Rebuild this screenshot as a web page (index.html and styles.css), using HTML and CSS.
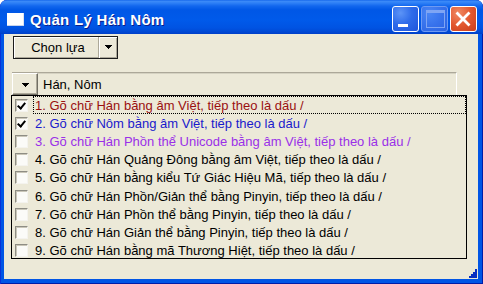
FILE: index.html
```html
<!DOCTYPE html>
<html lang="vi">
<head>
<meta charset="utf-8">
<title>Quản Lý Hán Nôm</title>
<link rel="stylesheet" href="styles.css">
</head>
<body>
<div class="window">
  <div class="titlebar">
    <div class="app-icon"><span class="app-icon-bar"></span></div>
    <div class="title">Quản Lý Hán Nôm</div>
    <div class="caption-buttons">
      <div class="cbtn cbtn-min"><span class="min-bar"></span></div>
      <div class="cbtn cbtn-max"><span class="max-box"></span></div>
      <div class="cbtn cbtn-close">
        <svg width="26" height="26" viewBox="0 0 26 26"><path d="M7.5 7.5 L18.5 18.5 M18.5 7.5 L7.5 18.5" stroke="#fff" stroke-width="2.8" stroke-linecap="square" fill="none"/></svg>
      </div>
    </div>
  </div>
  <div class="client">
    <div class="split-button">
      <span class="split-label">Chọn lựa</span>
      <span class="split-arrow"><svg width="7" height="4" viewBox="0 0 7 4" shape-rendering="crispEdges"><path d="M0 0H7V1H6V2H5V3H4V4H3V3H2V2H1V1H0Z" fill="#000"/></svg></span>
    </div>
    <div class="header">
      <div class="hdr-btn"><svg width="7" height="4" viewBox="0 0 7 4" shape-rendering="crispEdges"><path d="M0 0H7V1H6V2H5V3H4V4H3V3H2V2H1V1H0Z" fill="#000"/></svg></div>
      <div class="hdr-text">Hán, Nôm</div>
    </div>
    <ul class="list">
      <li class="row c-red"><span class="check checked"></span><span class="label focus">1. Gõ chữ Hán bằng âm Việt, tiếp theo là dấu /</span></li>
      <li class="row c-blue"><span class="check checked"></span><span class="label">2. Gõ chữ Nôm bằng âm Việt, tiếp theo là dấu /</span></li>
      <li class="row c-purple"><span class="check"></span><span class="label">3. Gõ chữ Hán Phồn thể Unicode bằng âm Việt, tiếp theo là dấu /</span></li>
      <li class="row"><span class="check"></span><span class="label">4. Gõ chữ Hán Quảng Đông bằng âm Việt, tiếp theo là dấu /</span></li>
      <li class="row"><span class="check"></span><span class="label">5. Gõ chữ Hán bằng kiểu Tứ Giác Hiệu Mã, tiếp theo là dấu /</span></li>
      <li class="row"><span class="check"></span><span class="label">6. Gõ chữ Hán Phồn/Giản thể bằng Pinyin, tiếp theo là dấu /</span></li>
      <li class="row"><span class="check"></span><span class="label">7. Gõ chữ Hán Phồn thể bằng Pinyin, tiếp theo là dấu /</span></li>
      <li class="row"><span class="check"></span><span class="label">8. Gõ chữ Hán Giản thể bằng Pinyin, tiếp theo là dấu /</span></li>
      <li class="row"><span class="check"></span><span class="label">9. Gõ chữ Hán bằng mã Thương Hiệt, tiếp theo là dấu /</span></li>
    </ul>
    <svg class="grip" width="8" height="9" viewBox="0 0 8 9" shape-rendering="crispEdges"><path d="M6 0H8V9H0V7H2V5H4V3H6Z" fill="#0A2FC0"/></svg>
  </div>
</div>
</body>
</html>
```
FILE: styles.css
```css
* { box-sizing: border-box; }

html, body {
  margin: 0;
  padding: 0;
  background: #ffffff;
}

body {
  font-family: "Liberation Sans", Arial, sans-serif;
  font-size: 13px;
  color: #000;
}

.window {
  width: 483px;
  height: 284px;
  display: flex;
  flex-direction: column;
  background: #0055E5;
  border-radius: 7px 7px 0 0;
  padding: 0 5px 5px 4px;
  box-shadow: inset 1px 0 0 #0831D9, inset -1px 0 0 #001DA8, inset 0 -1px 0 #001DA8;
  overflow: hidden;
}

.titlebar {
  height: 34px;
  margin: 0 -5px 0 -4px;
  padding: 4px 6px 0 7px;
  display: flex;
  align-items: center;
  border-radius: 7px 7px 0 0;
  background: linear-gradient(180deg,
    #0A5DE8 0px, #3E8CF8 1px, #2E80F6 3px, #1267EE 6px,
    #0057E6 10px, #005AEA 20px, #0053E2 28px, #0048D3 32px, #003FC8 34px);
}

.app-icon {
  width: 17px;
  height: 13px;
  background: #ffffff;
  box-shadow: inset 0 -1px 0 #C8D4EC, inset -1px 0 0 #DDE4F2;
  display: flex;
}

.app-icon-bar { display: none; }

.title {
  margin-left: 6px;
  color: #ffffff;
  font-family: "Liberation Sans", Arial, sans-serif;
  font-weight: bold;
  font-size: 15px;
  letter-spacing: 0.3px;
  text-shadow: 1px 1px 0 #0A1E8A;
  flex: 1;
}

.caption-buttons {
  display: flex;
  gap: 2px;
}

.cbtn {
  width: 27px;
  height: 26px;
  border: 1px solid #ffffff;
  border-radius: 3px;
  position: relative;
  display: flex;
}

.cbtn-min {
  background: radial-gradient(circle at 30% 25%, #5C94F7 0%, #2F6CEA 45%, #1F55DB 100%);
}

.min-bar {
  margin: 17px 0 0 5px;
  width: 10px;
  height: 3px;
  background: #ffffff;
}

.cbtn-max {
  border-color: #6E9AF2;
  background: radial-gradient(circle at 30% 25%, #4A86F5 0%, #3772EC 50%, #2B62E2 100%);
}

.max-box {
  margin: 3px 0 0 4px;
  width: 19px;
  height: 18px;
  border: 1px solid #7FA5F4;
  border-top-width: 3px;
}

.cbtn-close {
  background: radial-gradient(circle at 30% 25%, #F08A63 0%, #E2572F 50%, #C73D1C 100%);
}

.cbtn-close svg { display: block; margin: -1px 0 0 -1px; }

.client {
  flex: 1;
  background: #ECE9D8;
  position: relative;
  padding-top: 2px;
}

.split-button {
  margin-left: 9px;
  width: 105px;
  height: 23px;
  display: flex;
  border: 1px solid #1C1C1C;
  background: #ECE9D8;
  box-shadow: inset 1px 1px 0 #ffffff, inset -1px -1px 0 #ACA899;
}

.split-label {
  flex: 1;
  display: flex;
  align-items: center;
  justify-content: center;
  padding-left: 4px;
  border-right: 1px solid #ACA899;
}

.split-arrow {
  width: 18px;
  display: flex;
  align-items: center;
  justify-content: center;
  border-left: 1px solid #ffffff;
  padding-bottom: 1px;
}

.header {
  margin: 13px 0 0 8px;
  width: 445px;
  height: 23px;
  display: flex;
  align-items: stretch;
  border-top: 1px solid #ACA899;
  border-right: 1px solid #ffffff;
  box-shadow: inset 0 1px 0 #D5D2C2;
}

.hdr-btn {
  width: 26px;
  display: flex;
  align-items: center;
  justify-content: center;
  border-top: 1px solid #ffffff;
  border-left: 1px solid #ffffff;
  border-right: 1px solid #716F64;
  border-bottom: 1px solid #716F64;
  box-shadow: inset -1px -1px 0 #ACA899;
  padding-top: 1px;
}

.hdr-text {
  padding-left: 5px;
  display: flex;
  align-items: center;
}

.list {
  list-style: none;
  margin: 0 0 0 7px;
  padding: 0;
  width: 456px;
  height: 164px;
  border: 1px solid #000000;
  overflow: hidden;
  background: #ECE9D8;
}

.row {
  height: 18.2px;
  display: flex;
  align-items: center;
  padding-left: 3px;
}

.check {
  width: 13px;
  height: 13px;
  flex: none;
  background: #FBFBF8;
  border: 1px solid;
  border-color: #8E8D84 #F4F3EE #F4F3EE #8E8D84;
  box-shadow: inset 1px 1px 0 #C9C6B8;
  position: relative;
}

.check.checked::after {
  content: "";
  position: absolute;
  left: 2px;
  top: 1px;
  width: 3px;
  height: 6px;
  border: solid #000;
  border-width: 0 2px 2px 0;
  transform: translate(1px, 0) rotate(40deg);
}

.label {
  flex: 1;
  height: 100%;
  margin-left: 5px;
  padding-left: 1px;
  display: flex;
  align-items: center;
  border: 1px solid transparent;
  white-space: nowrap;
}

.label.focus {
  border: 1px dotted #000;
}

.c-red { color: #9A1010; }
.c-blue { color: #1A1ACC; }
.c-purple { color: #9A30E8; }

.grip {
  position: absolute;
  right: 1px;
  bottom: 1px;
}
```
